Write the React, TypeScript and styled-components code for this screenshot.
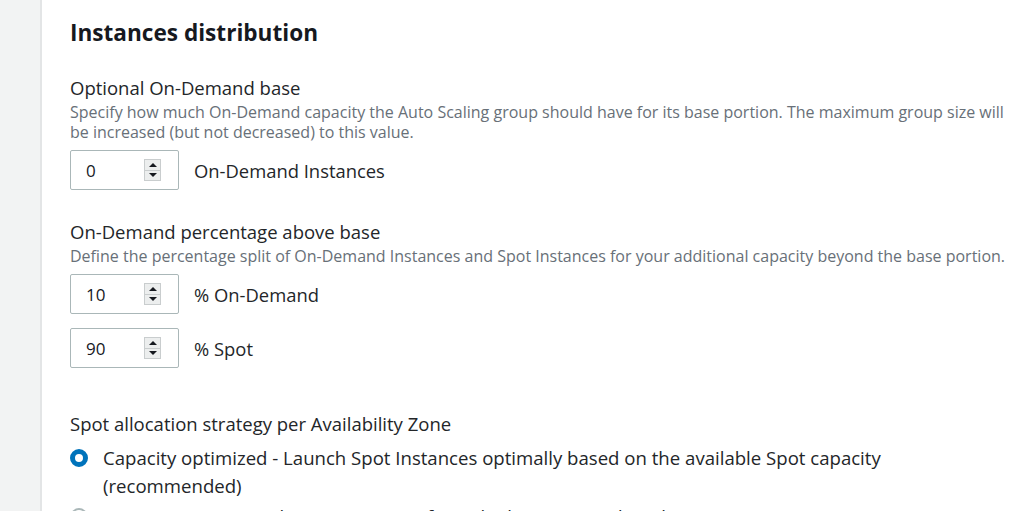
import React from 'react';
import styled, { createGlobalStyle } from 'styled-components';

const GlobalStyle = createGlobalStyle`
  html, body {
    margin: 0;
    padding: 0;
    background: #ffffff;
  }
  body {
    font-family: 'Open Sans', 'Liberation Sans', sans-serif;
    color: #16191f;
  }
`;

const Page = styled.div`
  display: flex;
  width: 1024px;
  height: 511px;
  overflow: hidden;
`;

const Side = styled.div`
  width: 40px;
  flex-shrink: 0;
  background: #f2f3f3;
  border-right: 2px solid #e3e5e6;
`;

const Panel = styled.div`
  flex: 1;
  padding: 19px 0 0 28px;
`;

const Heading = styled.h2`
  margin: 0 0 29px;
  font-size: 22.6px;
  line-height: 28px;
  font-weight: 700;
  color: #16191f;
`;

const Field = styled.div<{ gap?: number }>`
  margin-bottom: ${({ gap }) => gap ?? 30}px;
`;

const Label = styled.div`
  font-size: 18.5px;
  line-height: 24px;
  color: #232629;
`;

const Description = styled.div`
  max-width: 945px;
  margin-top: 2px;
  font-size: 16px;
  line-height: 20px;
  color: #687078;
`;

const InputRow = styled.div<{ first?: boolean }>`
  display: flex;
  align-items: center;
  gap: 15px;
  margin-top: ${({ first }) => (first ? 8 : 14)}px;
`;

const NumberBox = styled.div`
  box-sizing: border-box;
  width: 109px;
  height: 40px;
  border: 1px solid #aab7b8;
  border-radius: 2px;
  display: flex;
  align-items: center;
  padding: 0 17px 0 15px;
  font-size: 17px;
  color: #16191f;
`;

const Value = styled.span`
  flex: 1;
`;

const Spinner = styled.div`
  width: 17px;
  height: 22px;
  display: flex;
  flex-direction: column;
  border: 1px solid #c9cdce;
  background: #eceeee;
  box-sizing: border-box;
`;

const SpinHalf = styled.div<{ down?: boolean }>`
  flex: 1;
  display: flex;
  align-items: center;
  justify-content: center;
  border-top: ${({ down }) => (down ? '1px solid #c9cdce' : 'none')};
  &::after {
    content: '';
    width: 0;
    height: 0;
    border-left: 4px solid transparent;
    border-right: 4px solid transparent;
    ${({ down }) =>
      down ? 'border-top: 4px solid #16191f;' : 'border-bottom: 4px solid #16191f;'}
  }
`;

const Unit = styled.span`
  font-size: 18.4px;
  color: #232629;
`;

const RadioRow = styled.div<{ first?: boolean }>`
  display: flex;
  align-items: flex-start;
  gap: 15px;
  margin-top: ${({ first }) => (first ? 8 : 3)}px;
`;

const RadioDot = styled.span<{ checked?: boolean }>`
  box-sizing: border-box;
  flex-shrink: 0;
  width: 18px;
  height: 18px;
  margin-top: 5px;
  border-radius: 50%;
  border: ${({ checked }) => (checked ? '5px solid #0073bb' : '2px solid #aab7b8')};
  background: #ffffff;
`;

const RadioText = styled.span`
  max-width: 890px;
  font-size: 18.6px;
  line-height: 28px;
  color: #232629;
`;

const NumberInput = ({ value, unit, first }: { value: string; unit: string; first?: boolean }) => (
  <InputRow first={first}>
    <NumberBox>
      <Value>{value}</Value>
      <Spinner>
        <SpinHalf />
        <SpinHalf down />
      </Spinner>
    </NumberBox>
    <Unit>{unit}</Unit>
  </InputRow>
);

export default function App() {
  return (
    <>
      <GlobalStyle />
      <Page>
        <Side />
        <Panel>
          <Heading>Instances distribution</Heading>

          <Field>
            <Label>Optional On-Demand base</Label>
            <Description>
              Specify how much On-Demand capacity the Auto Scaling group should have for its base
              portion. The maximum group size will be increased (but not decreased) to this value.
            </Description>
            <NumberInput first value="0" unit="On-Demand Instances" />
          </Field>

          <Field gap={44}>
            <Label>On-Demand percentage above base</Label>
            <Description>
              Define the percentage split of On-Demand Instances and Spot Instances for your
              additional capacity beyond the base portion.
            </Description>
            <NumberInput first value="10" unit="% On-Demand" />
            <NumberInput value="90" unit="% Spot" />
          </Field>

          <Field>
            <Label>Spot allocation strategy per Availability Zone</Label>
            <RadioRow first>
              <RadioDot checked />
              <RadioText>
                Capacity optimized - Launch Spot Instances optimally based on the available Spot
                capacity (recommended)
              </RadioText>
            </RadioRow>
            <RadioRow>
              <RadioDot />
              <RadioText>Lowest price - Launch Spot Instances from the lowest priced pools</RadioText>
            </RadioRow>
          </Field>
        </Panel>
      </Page>
    </>
  );
}
